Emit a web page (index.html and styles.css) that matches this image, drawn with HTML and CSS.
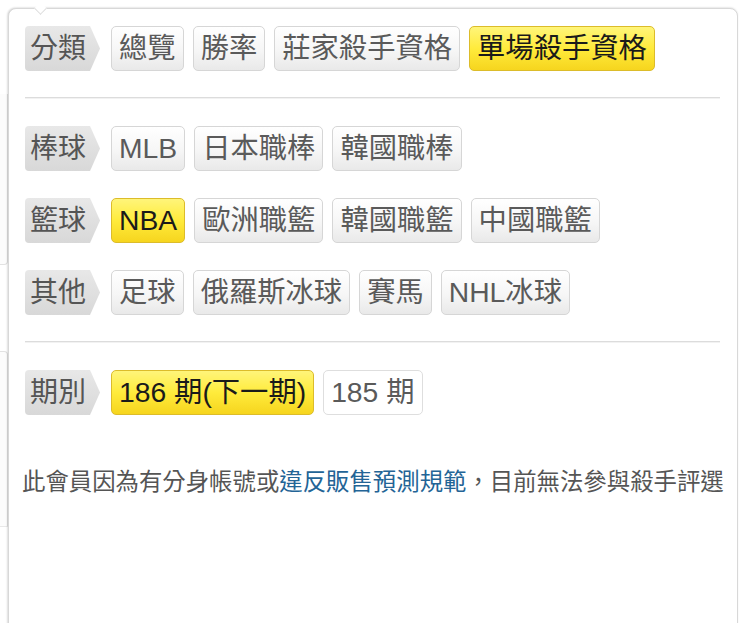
FILE: index.html
```html
<!DOCTYPE html>
<html>
  <head>
    <title>殺手資格</title>
    <link rel="stylesheet" href="styles.css">
  </head>
  <body>
    <div class="page">
      <div class="backdrop">
        <div class="stub stub-top"></div>
        <div class="stub stub-bottom"></div>
      </div>

      <div class="panel">
        <span class="caret"></span>

        <div class="section">
          <div class="row">
            <span class="label">分類</span>
            <a class="tag">總覽</a>
            <a class="tag">勝率</a>
            <a class="tag">莊家殺手資格</a>
            <a class="tag active">單場殺手資格</a>
          </div>
        </div>

        <div class="section">
          <div class="row">
            <span class="label">棒球</span>
            <a class="tag">MLB</a>
            <a class="tag">日本職棒</a>
            <a class="tag">韓國職棒</a>
          </div>
          <div class="row">
            <span class="label">籃球</span>
            <a class="tag active">NBA</a>
            <a class="tag">歐洲職籃</a>
            <a class="tag">韓國職籃</a>
            <a class="tag">中國職籃</a>
          </div>
          <div class="row">
            <span class="label">其他</span>
            <a class="tag">足球</a>
            <a class="tag">俄羅斯冰球</a>
            <a class="tag">賽馬</a>
            <a class="tag">NHL冰球</a>
          </div>
        </div>

        <div class="row">
          <span class="label">期別</span>
          <a class="tag active">186 期(下一期)</a>
          <a class="tag plain">185 期</a>
        </div>

        <p class="notice">此會員因為有分身帳號或<a href="#">違反販售預測規範</a>，目前無法參與殺手評選</p>
      </div>
    </div>
  </body>
</html>
```

FILE: styles.css
```css
html, body {
  margin: 0;
  padding: 0;
  background: #fff;
  overflow: hidden;
}
body {
  font-family: "Liberation Sans", "Noto Sans CJK TC", sans-serif;
  color: #555;
}
.page {
  display: flex;
  align-items: flex-start;
  padding-top: 8px;
}
.backdrop {
  width: 8px;
  flex: none;
  display: flex;
  flex-direction: column;
}
.stub {
  border: 1px solid #e2e2e2;
  border-left: none;
  background: #fcfcfc;
}
.stub-top {
  height: 170px;
  margin-top: 86px;
  border-top: none;
  border-radius: 0 0 4px 0;
}
.stub-bottom {
  height: 174px;
  margin-top: 86px;
  border-bottom: none;
  border-radius: 0 4px 0 0;
  box-shadow: 0 1px 0 #e8e8e8;
}
.panel {
  position: relative;
  width: 695px;
  min-height: 680px;
  padding: 17px 17px 0 16px;
  border: 1px solid #d8d8d8;
  border-radius: 8px 8px 0 0;
  box-shadow: -1px 0 2px rgba(0, 0, 0, 0.12), 0 -1px 2px rgba(0, 0, 0, 0.06);
  background: #fff;
}
.caret {
  position: absolute;
  top: -5px;
  left: 27px;
  width: 8px;
  height: 8px;
  background: #fff;
  border-right: 1px solid #ddd;
  border-bottom: 1px solid #ddd;
  transform: rotate(45deg);
}
.section {
  padding-bottom: 26px;
  margin-bottom: 28px;
  border-bottom: 1px solid #dcdcdc;
  box-shadow: 0 1px 0 #f2f2f2;
  display: flex;
  flex-direction: column;
  gap: 27px;
}
.row {
  display: flex;
  align-items: center;
  gap: 9px;
  height: 45px;
}
.label {
  height: 45px;
  line-height: 45px;
  font-size: 28px;
  padding: 0 14px 0 5px;
  margin-right: 2px;
  border-radius: 4px 0 0 4px;
  background: linear-gradient(#e8e8e8, #d8d8d8);
  color: #555;
  clip-path: polygon(0 0, calc(100% - 10px) 0, 100% 50%, calc(100% - 10px) 100%, 0 100%);
}
.tag {
  box-sizing: border-box;
  height: 45px;
  line-height: 43px;
  font-size: 28.3px;
  padding: 0 7px;
  border: 1px solid #d6d6d6;
  border-radius: 5px;
  background: linear-gradient(#fff 0%, #f6f6f6 55%, #e9e9e9 100%);
  color: #5a5a5a;
  white-space: nowrap;
  cursor: pointer;
}
.tag.active {
  background: linear-gradient(#fff57a 0%, #ffeb3c 50%, #f6d51e 100%);
  border-color: #dcbc2a;
  color: #1a1a1a;
}
.tag.plain {
  background: #fff;
  border-color: #dedede;
}
.notice {
  margin: 50px 0 0 -3px;
  font-size: 23.4px;
  line-height: 34px;
  white-space: nowrap;
  color: #555;
}
.notice a {
  color: #236496;
  text-decoration: none;
}
```
